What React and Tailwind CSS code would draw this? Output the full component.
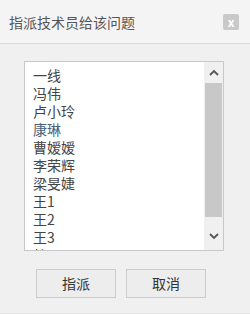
export default function App() {
  const items = ["一线", "冯伟", "卢小玲", "康琳", "曹嫒嫒", "李荣辉", "梁旻婕", "王1", "王2", "王3", "杜丽丽"];
  const font = { fontFamily: '"Microsoft YaHei", "Noto Sans CJK SC", "Liberation Sans", sans-serif' };
  return (
    <div className="w-[250px] h-[314px] bg-[#f0f0f0] flex flex-col overflow-hidden border-b border-[#e0e0e0]" style={font}>
      <div className="h-[44px] shrink-0 bg-[#f4f4f4] border-b border-[#d9d9d9] flex items-center justify-between pl-[9px] pr-[11px] pt-[1px]">
        <span className="text-[14px] text-[#555] leading-none tracking-[0px]">指派技术员给该问题</span>
        <div className="w-[16px] h-[16px] bg-[#c9c9c9] rounded-[2px] flex items-center justify-center text-white text-[12px] leading-none font-bold pb-[1px]">x</div>
      </div>
      <div className="pt-[17px] pl-[24px]">
        <div className="w-[200px] h-[190px] border border-[#c8c8c8] bg-white flex">
          <div className="flex-1 overflow-hidden pt-[4px] pl-[8px]">
            {items.map((t) => (
              <div key={t} className={"h-[18px] leading-[18px] text-[14px] " + (t === "康琳" ? "text-[#4a5e7e]" : "text-[#444]")}>{t}</div>
            ))}
          </div>
          <div className="w-[19px] bg-[#f0f0f0] flex flex-col">
            <div className="h-[21px] flex items-center justify-center">
              <svg width="10" height="7" viewBox="0 0 10 7"><path d="M1 6 L5 2 L9 6" fill="none" stroke="#555" strokeWidth="1.8" /></svg>
            </div>
            <div className="h-[134px] bg-[#c8c8c8] mx-[1px]"></div>
            <div className="flex-1 flex items-center justify-center pt-[6px]">
              <svg width="10" height="7" viewBox="0 0 10 7"><path d="M1 1 L5 5 L9 1" fill="none" stroke="#555" strokeWidth="1.8" /></svg>
            </div>
          </div>
        </div>
      </div>
      <div className="pt-[18px] pl-[36px] flex gap-[10px]">
        <button className="w-[80px] h-[29px] border border-[#ccc] bg-[#ededed] text-[14px] text-[#333]">指派</button>
        <button className="w-[80px] h-[29px] border border-[#ccc] bg-[#ededed] text-[14px] text-[#333]">取消</button>
      </div>
    </div>
  );
}
